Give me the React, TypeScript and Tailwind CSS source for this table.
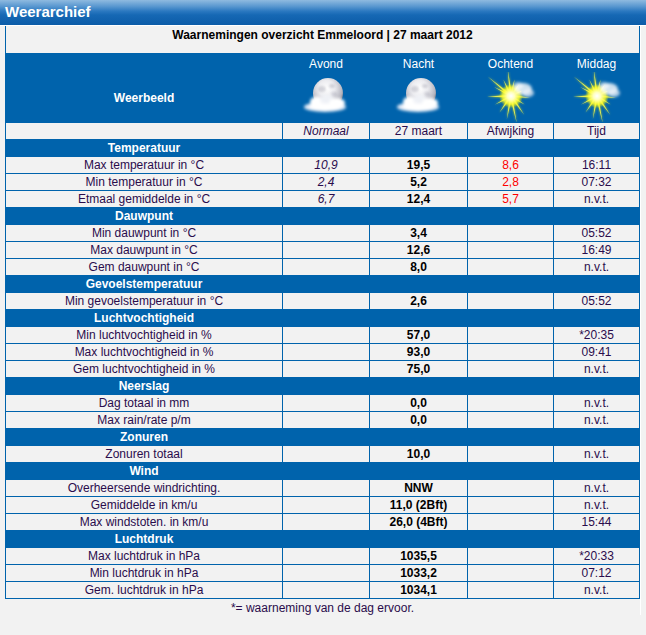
import React from 'react';

type Row =
  | { kind: 'section'; title: string }
  | { kind: 'data'; label: string; normal?: string; value: string; diff?: string; time: string };

const rows: Row[] = [
  { kind: 'section', title: 'Temperatuur' },
  { kind: 'data', label: 'Max temperatuur in °C', normal: '10,9', value: '19,5', diff: '8,6', time: '16:11' },
  { kind: 'data', label: 'Min temperatuur in °C', normal: '2,4', value: '5,2', diff: '2,8', time: '07:32' },
  { kind: 'data', label: 'Etmaal gemiddelde in °C', normal: '6,7', value: '12,4', diff: '5,7', time: 'n.v.t.' },
  { kind: 'section', title: 'Dauwpunt' },
  { kind: 'data', label: 'Min dauwpunt in °C', value: '3,4', time: '05:52' },
  { kind: 'data', label: 'Max dauwpunt in °C', value: '12,6', time: '16:49' },
  { kind: 'data', label: 'Gem dauwpunt in °C', value: '8,0', time: 'n.v.t.' },
  { kind: 'section', title: 'Gevoelstemperatuur' },
  { kind: 'data', label: 'Min gevoelstemperatuur in °C', value: '2,6', time: '05:52' },
  { kind: 'section', title: 'Luchtvochtigheid' },
  { kind: 'data', label: 'Min luchtvochtigheid in %', value: '57,0', time: '*20:35' },
  { kind: 'data', label: 'Max luchtvochtigheid in %', value: '93,0', time: '09:41' },
  { kind: 'data', label: 'Gem luchtvochtigheid in %', value: '75,0', time: 'n.v.t.' },
  { kind: 'section', title: 'Neerslag' },
  { kind: 'data', label: 'Dag totaal in mm', value: '0,0', time: 'n.v.t.' },
  { kind: 'data', label: 'Max rain/rate p/m', value: '0,0', time: 'n.v.t.' },
  { kind: 'section', title: 'Zonuren' },
  { kind: 'data', label: 'Zonuren totaal', value: '10,0', time: 'n.v.t.' },
  { kind: 'section', title: 'Wind' },
  { kind: 'data', label: 'Overheersende windrichting.', value: 'NNW', time: 'n.v.t.' },
  { kind: 'data', label: 'Gemiddelde in km/u', value: '11,0 (2Bft)', time: 'n.v.t.' },
  { kind: 'data', label: 'Max windstoten. in km/u', value: '26,0 (4Bft)', time: '15:44' },
  { kind: 'section', title: 'Luchtdruk' },
  { kind: 'data', label: 'Max luchtdruk in hPa', value: '1035,5', time: '*20:33' },
  { kind: 'data', label: 'Min luchtdruk in hPa', value: '1033,2', time: '07:12' },
  { kind: 'data', label: 'Gem. luchtdruk in hPa', value: '1034,1', time: 'n.v.t.' },
];

function MoonIcon({ id }: { id: string }) {
  return (
    <svg width="56" height="46" viewBox="0 0 56 46">
      <defs>
        <radialGradient id={`mg${id}`} cx="0.45" cy="0.35" r="0.68">
          <stop offset="0" stopColor="#ffffff" />
          <stop offset="0.4" stopColor="#ececf0" />
          <stop offset="0.78" stopColor="#b4b4be" />
          <stop offset="1" stopColor="#5c5c68" />
        </radialGradient>
        <filter id={`bl${id}`} x="-30%" y="-40%" width="160%" height="180%">
          <feGaussianBlur stdDeviation="1.5" />
        </filter>
        <filter id={`cr${id}`} x="-50%" y="-50%" width="200%" height="200%">
          <feGaussianBlur stdDeviation="0.8" />
        </filter>
      </defs>
      <circle cx="30" cy="21" r="15" fill={`url(#mg${id})`} />
      <g filter={`url(#cr${id})`} opacity="0.3">
        <ellipse cx="24" cy="17" rx="4" ry="3" fill="#8a8a9a" />
        <ellipse cx="34" cy="14" rx="3" ry="2" fill="#8a8a9a" />
        <ellipse cx="36" cy="22" rx="3" ry="2.5" fill="#9a9aaa" />
      </g>
      <g filter={`url(#bl${id})`}>
        <ellipse cx="27" cy="35" rx="21" ry="5" fill="#dfe8f6" />
        <ellipse cx="19" cy="30" rx="7" ry="5.5" fill="#ffffff" />
        <ellipse cx="29" cy="28" rx="7" ry="5" fill="#f0f2f8" opacity="0.95" />
        <ellipse cx="39" cy="31" rx="8" ry="5" fill="#ffffff" />
        <ellipse cx="27" cy="35" rx="16" ry="3.5" fill="#ffffff" />
      </g>
    </svg>
  );
}

const rays: [number, number][] = [
  [-140, 30], [-115, 18], [-97, 27], [-78, 17], [-55, 14], [-25, 13], [5, 19],
  [32, 16], [55, 23], [78, 28], [100, 24], [125, 20], [152, 18], [178, 24], [208, 19],
];

function SunIcon({ id }: { id: string }) {
  const cx = 28;
  const cy = 24;
  const polys = rays.map(([deg, len]) => {
    const a = (deg * Math.PI) / 180;
    const w = 0.3;
    const r0 = 3.5;
    const p1 = [cx + Math.cos(a - w) * r0, cy + Math.sin(a - w) * r0];
    const p2 = [cx + Math.cos(a) * len, cy + Math.sin(a) * len];
    const p3 = [cx + Math.cos(a + w) * r0, cy + Math.sin(a + w) * r0];
    return [p1, p2, p3].map((p) => p.map((v) => v.toFixed(1)).join(',')).join(' ');
  });
  return (
    <svg width="56" height="52" viewBox="0 0 56 52">
      <defs>
        <radialGradient id={`sg${id}`} cx="0.5" cy="0.5" r="0.5">
          <stop offset="0" stopColor="#ffffff" />
          <stop offset="0.3" stopColor="#ffffc0" />
          <stop offset="0.7" stopColor="#ffff30" stopOpacity="0.8" />
          <stop offset="1" stopColor="#f0f000" stopOpacity="0" />
        </radialGradient>
        <filter id={`sb${id}`} x="-30%" y="-30%" width="160%" height="160%">
          <feGaussianBlur stdDeviation="1.3" />
        </filter>
        <filter id={`sc${id}`} x="-40%" y="-40%" width="180%" height="180%">
          <feGaussianBlur stdDeviation="1.8" />
        </filter>
      </defs>
      <g filter={`url(#sb${id})`}>
        {polys.map((p, i) => (
          <polygon key={i} points={p} fill="#f0ec00" />
        ))}
      </g>
      {polys.map((p, i) => (
        <polygon key={`b${i}`} points={p} fill="#ffff50" opacity="0.85" />
      ))}
      <circle cx={cx} cy={cy} r="12" fill={`url(#sg${id})`} />
      <g filter={`url(#sc${id})`}>
        <ellipse cx="40" cy="17" rx="9" ry="6" fill="#ffffff" opacity="0.8" />
        <ellipse cx="45" cy="21" rx="6" ry="4" fill="#eef2f8" opacity="0.75" />
        <ellipse cx="35" cy="14" rx="5" ry="4" fill="#ffffff" opacity="0.6" />
      </g>
    </svg>
  );
}

const cell = 'bg-[#f2f2f2] h-[16px] leading-[16px] text-center text-[12px] whitespace-nowrap overflow-hidden';

export default function App() {
  return (
    <div className="w-[646px] min-h-[635px] bg-[#f2f2f2] font-['Liberation_Sans',Arial,sans-serif] text-[#2a0c4c]">
      <div className="h-[26px] border-b border-white bg-[linear-gradient(to_bottom,#8fbae0_0%,#5a98d0_25%,#2a78c0_45%,#1668b4_60%,#0c5ca8_100%)] pl-[5px] text-[15px] font-bold leading-[24px] text-white">
        Weerarchief
      </div>
      <div className="ml-[5px] w-[635px] shadow-[1px_0_0_#ffffff]">
        <div className="grid grid-cols-[276px_86px_97px_85px_85px] gap-px bg-[#0063ac] px-px pb-px">
          <div className="col-span-5 h-[27px] bg-[#f2f2f2] pt-[1px] text-center text-[12px] font-bold leading-[16px] text-black">
            Waarnemingen overzicht Emmeloord | 27 maart 2012
          </div>
          <div className="h-[68px] pt-[37px] text-center text-[12px] font-bold leading-[14px] text-white">
            Weerbeeld
          </div>
          {['Avond', 'Nacht', 'Ochtend', 'Middag'].map((t, i) => (
            <div key={t} className="flex h-[68px] flex-col items-center overflow-hidden pt-[3px] text-[12px] leading-[14px] text-white">
              <div className="h-[14px]">{t}</div>
              <div className="mt-[1px] h-[50px]">
                {i < 2 ? <MoonIcon id={`m${i}`} /> : <SunIcon id={`s${i}`} />}
              </div>
            </div>
          ))}
          <div className={cell}></div>
          <div className={`${cell} italic`}>Normaal</div>
          <div className={cell}>27 maart</div>
          <div className={cell}>Afwijking</div>
          <div className={cell}>Tijd</div>
          {rows.map((r, i) =>
            r.kind === 'section' ? (
              <div key={i} className="col-span-5 h-[16px] bg-[#0063ac] text-[12px] font-bold leading-[16px] text-white">
                <div className="w-[276px] text-center">{r.title}</div>
              </div>
            ) : (
              <React.Fragment key={i}>
                <div className={cell}>{r.label}</div>
                <div className={`${cell} italic`}>{r.normal ?? ''}</div>
                <div className={`${cell} font-bold text-black`}>{r.value}</div>
                <div className={`${cell} text-[#ff0000]`}>{r.diff ?? ''}</div>
                <div className={cell}>{r.time}</div>
              </React.Fragment>
            )
          )}
        </div>
        <div className="mt-[2px] text-center text-[12px] leading-[14px]">*= waarneming van de dag ervoor.</div>
      </div>
    </div>
  );
}
